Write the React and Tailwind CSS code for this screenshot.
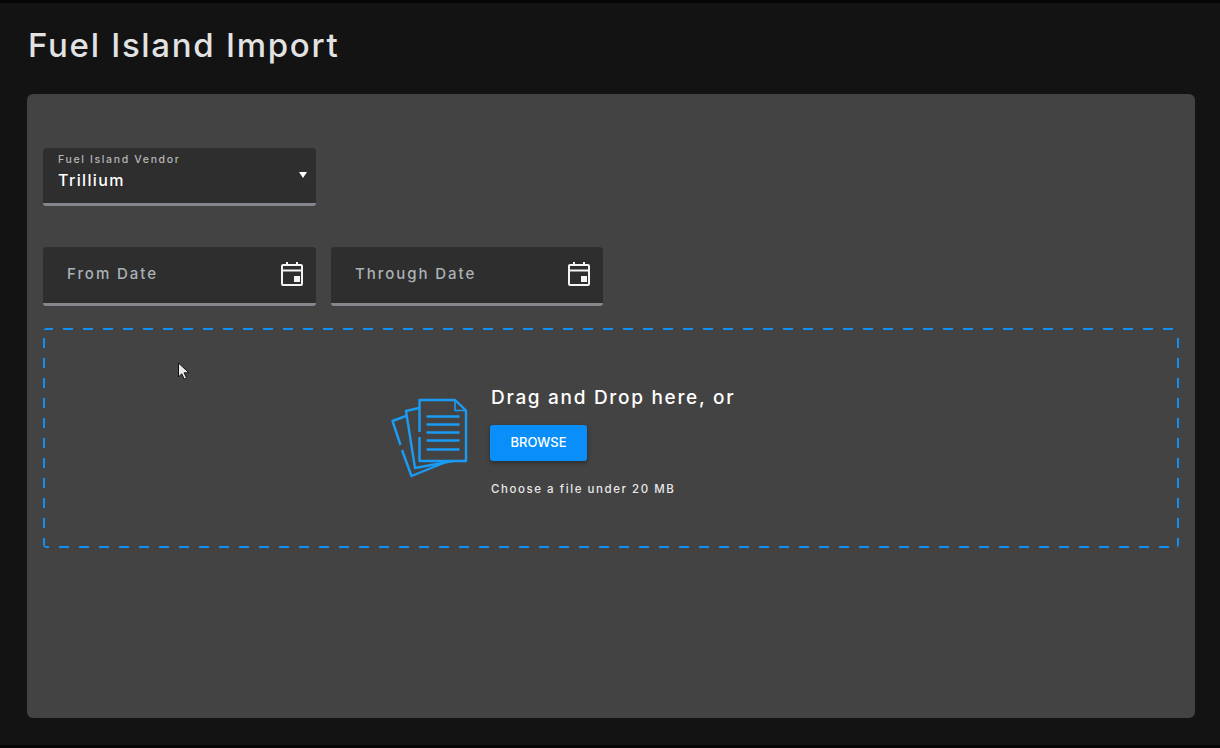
import React from 'react';

const CalendarIcon = () => (
  <svg className="w-[24px] h-[26px]" viewBox="0 0 24 26" fill="none" stroke="#f4f4f4" strokeWidth="2">
    <rect x="2" y="4" width="20" height="20" rx="1" />
    <path d="M2 9.5h20" />
    <path d="M7 1v4M17 1v4" />
    <rect x="14" y="15" width="6" height="6" fill="#f4f4f4" stroke="none" />
  </svg>
);

const FilesIcon = () => (
  <svg className="w-[80px] h-[82px] shrink-0" viewBox="390 396 80 82" fill="none" stroke="#1a9bf5" strokeWidth="2.4" strokeLinejoin="round">
    <path d="M419.5 431V399h35.5l11 10.5V460h-46.5v-24" />
    <path d="M455 399v10.5h11" strokeWidth="1.6" />
    <path d="M426.5 415.5h33M426.5 423.5h33M426.5 431.5h33M426.5 439.5h33M426.5 448.5h33" />
    <path d="M419 407l-13 3 9 57 38-7" />
    <path d="M406 415l-13.5 5 8 24M402 449l9.5 26 37-15" />
  </svg>
);

const DateField = ({ label, width }) => (
  <div className={`${width} h-[59px] flex items-center justify-between pl-[24px] pr-[12px] pb-[2px] bg-[#2e2e2e] rounded-t-[4px] rounded-b-[3px] border-b-[3px] border-[#84878c]`}>
    <span className="text-[15px] tracking-[1.95px] font-[450] text-[#aab2b6]">{label}</span>
    <CalendarIcon />
  </div>
);

const App = () => {
  return (
    <div className="relative w-[1220px] h-[748px] overflow-hidden bg-[#131313] border-y-[3px] border-[#050505] [font-family:Inter,sans-serif]">
      {/* Header */}
      <div className="h-[91px] pl-[28px] pt-[21px]">
        <h1 className="text-[33px] leading-[42px] font-[450] tracking-[1.7px] text-[#e2e2e2]">Fuel Island Import</h1>
      </div>

      {/* Main panel */}
      <div className="ml-[27px] w-[1168px] h-[624px] rounded-[6px] bg-[#434343] px-[16px] pt-[54px]">
        <div className="relative w-[273px] h-[58px] pl-[15px] pt-[5px] bg-[#2e2e2e] rounded-t-[4px] rounded-b-[3px] border-b-[3px] border-[#84878c]">
          <div className="text-[10.5px] leading-[13px] tracking-[1.65px] font-[450] text-[#b4b6b8]">Fuel Island Vendor</div>
          <div className="mt-[4px] text-[16px] leading-[20px] tracking-[1.35px] font-[450] text-white">Trillium</div>
          <div className="absolute right-[9px] top-[24px] w-0 h-0 border-x-[4px] border-x-transparent border-t-[6px] border-t-white" />
        </div>

        <div className="mt-[41px] flex gap-[15px]">
          <DateField label="From Date" width="w-[273px]" />
          <DateField label="Through Date" width="w-[272px]" />
        </div>

        {/* Drop zone */}
        <div className="mt-[22px] h-[220px] flex pl-[347px] pt-[69px] rounded-[4px] bg-no-repeat bg-[repeating-linear-gradient(90deg,#1090f5_0_10px,transparent_10px_20px),repeating-linear-gradient(90deg,#1090f5_0_6px,transparent_6px_16px,#1090f5_16px_20px),repeating-linear-gradient(180deg,transparent_0_10px,#1090f5_10px_20px),repeating-linear-gradient(180deg,transparent_0_10px,#1090f5_10px_20px)] [background-size:100%_2px,100%_2px,2px_100%,2px_100%] [background-position:0_0,0_100%,0_0,100%_0]">
          <FilesIcon />
          <div className="ml-[20px] -mt-[11px] flex flex-col items-start">
            <div className="ml-[1px] text-[19px] leading-[24px] tracking-[1.7px] font-[450] text-white">Drag and Drop here, or</div>
            <button className="mt-[15px] w-[97px] h-[36px] rounded-[3px] bg-[#0a8ffa] text-[13px] font-medium text-white shadow-[0_2px_4px_rgba(0,0,0,0.35)]">BROWSE</button>
            <div className="ml-[1px] mt-[20px] text-[11.5px] leading-[16px] tracking-[1.55px] font-medium text-[#e8e8e8]">Choose a file under 20 MB</div>
          </div>
        </div>
      </div>

      {/* Mouse pointer */}
      <svg className="absolute left-[177px] top-[359px] w-[14px] h-[18px]" viewBox="0 0 14 18">
        <path d="M1.5 1v14l3.2-3.2 2.5 5.2 2.4-1.1-2.5-5.1H12z" fill="#e8e8e8" stroke="#111" strokeWidth="1" />
      </svg>
    </div>
  );
};

export default App;
